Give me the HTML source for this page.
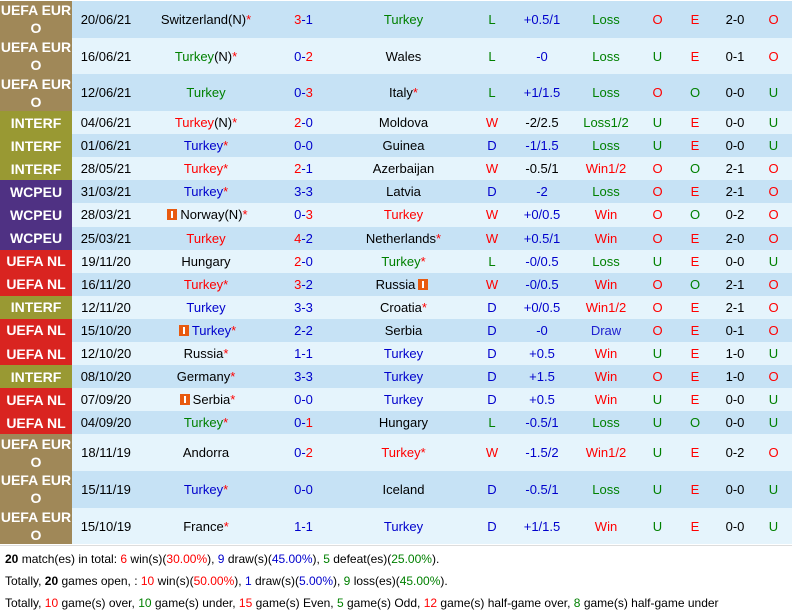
<!DOCTYPE html>
<html><head><meta charset="utf-8"><style>
body{margin:0;width:792px;height:604px;overflow:hidden;background:#fff;font-family:"Liberation Sans",Arial,sans-serif;font-size:13px;color:#000}
table{border-collapse:collapse;table-layout:fixed;width:792px}
td{padding:0;text-align:center;white-space:nowrap;overflow:hidden}
tr.a td{background:#c6e2f5}
tr.b td{background:#e5f4fc}
tr.t td{height:36.7px}
tr.s td{height:23.1px}
td.lg{color:#fff;font-weight:bold;font-size:14px;line-height:18px;white-space:normal}
tr td.eu{background:#a08858}tr td.it{background:#999933}tr td.wc{background:#4f3183}tr td.nl{background:#d92420}
.r{color:#f00}.g{color:#008000}.bl{color:#00c}.bb{color:#2020d0}
.f{display:inline-block;width:10px;height:11px;background:#e85a10;vertical-align:-1px;margin:0 3px;position:relative}
.f:after{content:"";position:absolute;left:4px;top:2px;width:2px;height:7px;background:#fff}
.sum{font-size:12px;line-height:22px;padding-left:5px;white-space:nowrap}
.sum b{font-weight:bold}
</style></head><body>
<div style="height:1px"></div>
<table>
<colgroup><col style="width:72px"><col style="width:68px"><col style="width:132px"><col style="width:63px"><col style="width:137px"><col style="width:40px"><col style="width:60px"><col style="width:68px"><col style="width:35px"><col style="width:40px"><col style="width:40px"><col style="width:37px"></colgroup>
<tr class="a t"><td class="lg eu">UEFA EUR O</td><td>20/06/21</td><td>Switzerland(N)<span class="r">*</span></td><td><span class="r">3</span><span class="bl">-</span><span class="bl">1</span></td><td class="g">Turkey</td><td class="g">L</td><td class="bl">+0.5/1</td><td class="g">Loss</td><td class="r">O</td><td class="r">E</td><td>2-0</td><td class="r">O</td></tr>
<tr class="b t"><td class="lg eu">UEFA EUR O</td><td>16/06/21</td><td><span class="g">Turkey</span>(N)<span class="r">*</span></td><td><span class="bl">0-</span><span class="r">2</span></td><td>Wales</td><td class="g">L</td><td class="bl">-0</td><td class="g">Loss</td><td class="g">U</td><td class="r">E</td><td>0-1</td><td class="r">O</td></tr>
<tr class="a t"><td class="lg eu">UEFA EUR O</td><td>12/06/21</td><td class="g">Turkey</td><td><span class="bl">0-</span><span class="r">3</span></td><td>Italy<span class="r">*</span></td><td class="g">L</td><td class="bl">+1/1.5</td><td class="g">Loss</td><td class="r">O</td><td class="g">O</td><td>0-0</td><td class="g">U</td></tr>
<tr class="b s"><td class="lg it">INTERF</td><td>04/06/21</td><td><span class="r">Turkey</span>(N)<span class="r">*</span></td><td><span class="r">2</span><span class="bl">-0</span></td><td>Moldova</td><td class="r">W</td><td>-2/2.5</td><td class="g">Loss1/2</td><td class="g">U</td><td class="r">E</td><td>0-0</td><td class="g">U</td></tr>
<tr class="a s"><td class="lg it">INTERF</td><td>01/06/21</td><td><span class="bl">Turkey</span><span class="r">*</span></td><td class="bl">0-0</td><td>Guinea</td><td class="bl">D</td><td class="bl">-1/1.5</td><td class="g">Loss</td><td class="g">U</td><td class="r">E</td><td>0-0</td><td class="g">U</td></tr>
<tr class="b s"><td class="lg it">INTERF</td><td>28/05/21</td><td><span class="r">Turkey*</span></td><td><span class="r">2</span><span class="bl">-1</span></td><td>Azerbaijan</td><td class="r">W</td><td>-0.5/1</td><td class="r">Win1/2</td><td class="r">O</td><td class="g">O</td><td>2-1</td><td class="r">O</td></tr>
<tr class="a s"><td class="lg wc">WCPEU</td><td>31/03/21</td><td><span class="bl">Turkey</span><span class="r">*</span></td><td class="bl">3-3</td><td>Latvia</td><td class="bl">D</td><td class="bl">-2</td><td class="g">Loss</td><td class="r">O</td><td class="r">E</td><td>2-1</td><td class="r">O</td></tr>
<tr class="b s"><td class="lg wc">WCPEU</td><td>28/03/21</td><td><span class="f"></span>Norway(N)<span class="r">*</span></td><td><span class="bl">0-</span><span class="r">3</span></td><td class="r">Turkey</td><td class="r">W</td><td class="bl">+0/0.5</td><td class="r">Win</td><td class="r">O</td><td class="g">O</td><td>0-2</td><td class="r">O</td></tr>
<tr class="a s"><td class="lg wc">WCPEU</td><td>25/03/21</td><td class="r">Turkey</td><td><span class="r">4</span><span class="bl">-2</span></td><td>Netherlands<span class="r">*</span></td><td class="r">W</td><td class="bl">+0.5/1</td><td class="r">Win</td><td class="r">O</td><td class="r">E</td><td>2-0</td><td class="r">O</td></tr>
<tr class="b s"><td class="lg nl">UEFA NL</td><td>19/11/20</td><td>Hungary</td><td><span class="r">2</span><span class="bl">-0</span></td><td><span class="g">Turkey</span><span class="r">*</span></td><td class="g">L</td><td class="bl">-0/0.5</td><td class="g">Loss</td><td class="g">U</td><td class="r">E</td><td>0-0</td><td class="g">U</td></tr>
<tr class="a s"><td class="lg nl">UEFA NL</td><td>16/11/20</td><td class="r">Turkey*</td><td><span class="r">3</span><span class="bl">-2</span></td><td>Russia<span class="f"></span></td><td class="r">W</td><td class="bl">-0/0.5</td><td class="r">Win</td><td class="r">O</td><td class="g">O</td><td>2-1</td><td class="r">O</td></tr>
<tr class="b s"><td class="lg it">INTERF</td><td>12/11/20</td><td class="bl">Turkey</td><td class="bl">3-3</td><td>Croatia<span class="r">*</span></td><td class="bl">D</td><td class="bl">+0/0.5</td><td class="r">Win1/2</td><td class="r">O</td><td class="r">E</td><td>2-1</td><td class="r">O</td></tr>
<tr class="a s"><td class="lg nl">UEFA NL</td><td>15/10/20</td><td><span class="f"></span><span class="bl">Turkey</span><span class="r">*</span></td><td class="bl">2-2</td><td>Serbia</td><td class="bl">D</td><td class="bl">-0</td><td class="bb">Draw</td><td class="r">O</td><td class="r">E</td><td>0-1</td><td class="r">O</td></tr>
<tr class="b s"><td class="lg nl">UEFA NL</td><td>12/10/20</td><td>Russia<span class="r">*</span></td><td class="bl">1-1</td><td class="bl">Turkey</td><td class="bl">D</td><td class="bl">+0.5</td><td class="r">Win</td><td class="g">U</td><td class="r">E</td><td>1-0</td><td class="g">U</td></tr>
<tr class="a s"><td class="lg it">INTERF</td><td>08/10/20</td><td>Germany<span class="r">*</span></td><td class="bl">3-3</td><td class="bl">Turkey</td><td class="bl">D</td><td class="bl">+1.5</td><td class="r">Win</td><td class="r">O</td><td class="r">E</td><td>1-0</td><td class="r">O</td></tr>
<tr class="b s"><td class="lg nl">UEFA NL</td><td>07/09/20</td><td><span class="f"></span>Serbia<span class="r">*</span></td><td class="bl">0-0</td><td class="bl">Turkey</td><td class="bl">D</td><td class="bl">+0.5</td><td class="r">Win</td><td class="g">U</td><td class="r">E</td><td>0-0</td><td class="g">U</td></tr>
<tr class="a s"><td class="lg nl">UEFA NL</td><td>04/09/20</td><td><span class="g">Turkey</span><span class="r">*</span></td><td><span class="bl">0-</span><span class="r">1</span></td><td>Hungary</td><td class="g">L</td><td class="bl">-0.5/1</td><td class="g">Loss</td><td class="g">U</td><td class="g">O</td><td>0-0</td><td class="g">U</td></tr>
<tr class="b t"><td class="lg eu">UEFA EUR O</td><td>18/11/19</td><td>Andorra</td><td><span class="bl">0-</span><span class="r">2</span></td><td class="r">Turkey*</td><td class="r">W</td><td class="bl">-1.5/2</td><td class="r">Win1/2</td><td class="g">U</td><td class="r">E</td><td>0-2</td><td class="r">O</td></tr>
<tr class="a t"><td class="lg eu">UEFA EUR O</td><td>15/11/19</td><td><span class="bl">Turkey</span><span class="r">*</span></td><td class="bl">0-0</td><td>Iceland</td><td class="bl">D</td><td class="bl">-0.5/1</td><td class="g">Loss</td><td class="g">U</td><td class="r">E</td><td>0-0</td><td class="g">U</td></tr>
<tr class="b t"><td class="lg eu">UEFA EUR O</td><td>15/10/19</td><td>France<span class="r">*</span></td><td class="bl">1-1</td><td class="bl">Turkey</td><td class="bl">D</td><td class="bl">+1/1.5</td><td class="r">Win</td><td class="g">U</td><td class="r">E</td><td>0-0</td><td class="g">U</td></tr>
</table>
<div style="border-top:1px solid #ddd;margin-top:1px;padding-top:2px">
<div class="sum"><b>20</b> match(es) in total: <span class="r">6</span> win(s)(<span class="r">30.00%</span>), <span class="bl">9</span> draw(s)(<span class="bl">45.00%</span>), <span class="g">5</span> defeat(es)(<span class="g">25.00%</span>).</div>
<div class="sum">Totally, <b>20</b> games open, : <span class="r">10</span> win(s)(<span class="r">50.00%</span>), <span class="bl">1</span> draw(s)(<span class="bl">5.00%</span>), <span class="g">9</span> loss(es)(<span class="g">45.00%</span>).</div>
<div class="sum">Totally, <span class="r">10</span> game(s) over, <span class="g">10</span> game(s) under, <span class="r">15</span> game(s) Even, <span class="g">5</span> game(s) Odd, <span class="r">12</span> game(s) half-game over, <span class="g">8</span> game(s) half-game under</div>
</div>
</body></html>
